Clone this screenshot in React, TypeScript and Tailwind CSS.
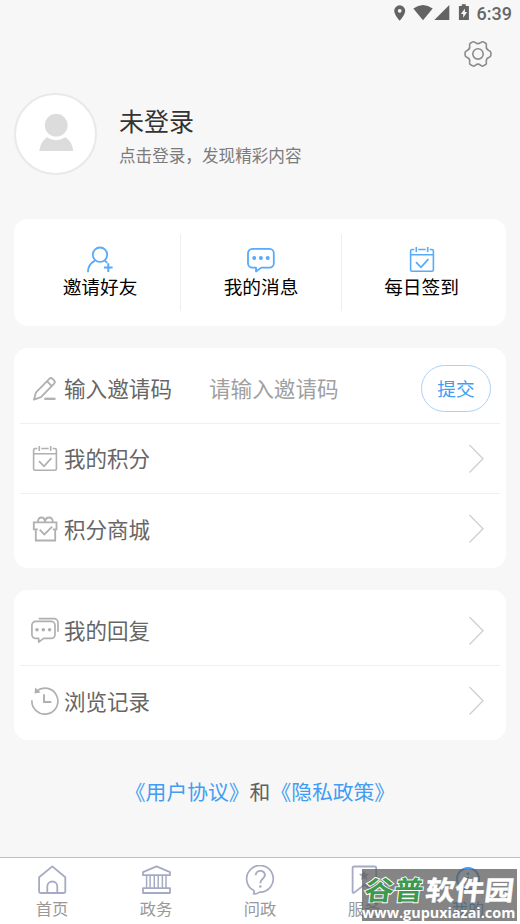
import React from 'react';

interface IconProps {
  className?: string;
}

const StatusIcons: React.FC = () => (
  <svg width="78" height="18" viewBox="393 4 78 18" fill="#636363">
    <path fillRule="evenodd" d="M399.7 5.3a5.5 5.5 0 0 0-5.5 5.5c0 4 5.5 10 5.5 10s5.5-6 5.5-10a5.5 5.5 0 0 0-5.5-5.5zm0 3.6a1.9 1.9 0 1 1 0 3.8 1.9 1.9 0 0 1 0-3.8z" />
    <path d="M413.3 8.6Q423 1.6 432.7 8.6L423 20.2z" />
    <path d="M449.3 5V20H434.3z" />
    <path fillRule="evenodd" d="M461.8 4.2h4v1.8h3.1V20h-10V6h2.9zm3.1 4.3-4 5.5h2.3v3.8l3.9-5.7h-2.2z" />
  </svg>
);

const GearIcon: React.FC = () => (
  <svg width="28" height="28" viewBox="0 0 28 28" fill="none" stroke="#8b8b8b" strokeWidth="1.6" strokeLinejoin="round">
    <path d="M8.7 1.9C9.9 1.3 10.6 2 11.5 2.7C13 3.9 15 3.9 16.5 2.7C17.4 2 18.1 1.3 19.3 1.9L21.7 3.3C22.9 4 22.5 5 22.3 6.1C22 8 23 9.7 24.8 10.4C25.9 10.8 26.9 11.2 26.9 12.5V15.3C26.9 16.6 25.9 17 24.8 17.4C23 18.1 22 19.8 22.3 21.7C22.5 22.8 22.9 23.8 21.7 24.5L19.3 25.9C18.1 26.5 17.4 25.8 16.5 25.1C15 23.9 13 23.9 11.5 25.1C10.6 25.8 9.9 26.5 8.7 25.9L6.3 24.5C5.1 23.8 5.5 22.8 5.7 21.7C6 19.8 5 18.1 3.2 17.4C2.1 17 1.1 16.6 1.1 15.3V12.5C1.1 11.2 2.1 10.8 3.2 10.4C5 9.7 6 8 5.7 6.1C5.5 5 5.1 4 6.3 3.3z" />
    <circle cx="14" cy="13.9" r="5.2" />
  </svg>
);

const InviteIcon: React.FC<IconProps> = ({ className }) => (
  <svg className={className} width="28" height="28" viewBox="0 0 28 28" fill="none" stroke="currentColor" strokeWidth="1.8">
    <circle cx="14" cy="8.7" r="7.2" />
    <path d="M1.9 26.2C1.9 21 4.5 17 8.9 14.6M18.7 14.6L21.3 16.7" />
    <path d="M22.3 17.3v8.6M18 21.6h8.6" strokeWidth="2" />
  </svg>
);

const MessageIcon: React.FC<IconProps> = ({ className }) => (
  <svg className={className} width="28" height="28" viewBox="0 0 28 28" fill="none" stroke="currentColor" strokeWidth="1.8" strokeLinejoin="round">
    <path d="M5.3 2.8H22.5A4.3 4.3 0 0 1 26.8 7.1V17.3A4.3 4.3 0 0 1 22.5 21.6H14.3L9 25.5V21.6H5.3A4.3 4.3 0 0 1 1 17.3V7.1A4.3 4.3 0 0 1 5.3 2.8z" />
    <g fill="currentColor" stroke="none">
      <circle cx="7.2" cy="12" r="2" />
      <circle cx="13.9" cy="12" r="2" />
      <circle cx="20.7" cy="12" r="2" />
    </g>
  </svg>
);

const CalendarIcon: React.FC<IconProps> = ({ className }) => (
  <svg className={className} width="28" height="28" viewBox="0 0 28 28" fill="none" stroke="currentColor" strokeWidth="1.6">
    <path d="M6.3 3.5H4.2Q2.6 3.5 2.6 5.1V23.7Q2.6 25.3 4.2 25.3H23.8Q25.4 25.3 25.4 23.7V5.1Q25.4 3.5 23.8 3.5H21.7M10.3 3.5H17.7M2.6 8.7H25.4M8.3 1V6M19.7 1V6" />
    <path d="M8 16.2L13 21.3L20.4 13.2" strokeWidth="1.8" />
  </svg>
);

const PencilIcon: React.FC<IconProps> = ({ className }) => (
  <svg className={className} width="28" height="28" viewBox="0 0 28 28" fill="none" stroke="currentColor" strokeWidth="1.8" strokeLinejoin="round">
    <path d="M3 24.6L5 17.3L18.3 3.8Q20 2.2 21.6 3.8L23.1 5.4Q24.6 7 23.1 8.6L10 22.2z" />
    <path d="M15.9 6.2L20.9 11.1" />
    <path d="M13.3 23.8H24.5" strokeWidth="2.3" />
  </svg>
);

const GiftIcon: React.FC<IconProps> = ({ className }) => (
  <svg className={className} width="28" height="28" viewBox="0 0 28 28" fill="none" stroke="currentColor" strokeWidth="1.8">
    <path d="M6.8 14.3H2.8V7.3H25.5V14.3H21.8M4.8 14.3V25.5H24.2V14.3" />
    <path d="M7 7C6.6 1 13.8 1 14.1 7M14.1 7C14.4 1 22.2 1 21.7 7" />
    <path d="M8.7 14.7L13.3 19.4L21.2 11.6" />
  </svg>
);

const ReplyIcon: React.FC<IconProps> = ({ className }) => (
  <svg className={className} width="28" height="28" viewBox="0 0 28 28" fill="none" stroke="currentColor" strokeWidth="1.7" strokeLinejoin="round">
    <path d="M4.7 4.4H20.2A3.8 3.8 0 0 1 24 8.2V17.6A3.8 3.8 0 0 1 20.2 21.4H12.6L7.7 25.2V21.4H4.7A3.8 3.8 0 0 1 0.9 17.6V8.2A3.8 3.8 0 0 1 4.7 4.4z" />
    <path d="M7.7 1.6H23A4 4 0 0 1 27 5.6V14.8" />
    <g fill="currentColor" stroke="none">
      <circle cx="6" cy="12.7" r="1.8" />
      <circle cx="12.3" cy="12.7" r="1.8" />
      <circle cx="18.6" cy="12.7" r="1.8" />
    </g>
  </svg>
);

const HistoryIcon: React.FC<IconProps> = ({ className }) => (
  <svg className={className} width="28" height="28" viewBox="0 0 28 28" fill="none" stroke="currentColor" strokeWidth="1.7">
    <path d="M0.9 13.3A13 13 0 1 0 5.5 4.2" />
    <path d="M4.2 0.5L3.5 6.6L9.6 5.4z" fill="currentColor" stroke="none" />
    <path d="M13 7.3V15H20.3" strokeWidth="1.9" />
  </svg>
);

const ChevronIcon: React.FC = () => (
  <svg width="16" height="30" viewBox="0 0 16 30" fill="none" stroke="#cfcfcf" strokeWidth="1.3">
    <path d="M0.5 1L14 14.7L0.5 28.5" />
  </svg>
);

const HomeIcon: React.FC = () => (
  <svg width="30" height="30" viewBox="0 0 30 30" fill="none" stroke="currentColor" strokeWidth="1.8" strokeLinejoin="round">
    <path d="M2.1 12.2L15.3 1.4L28.3 12.2V26.2Q28.3 28 26.5 28H3.9Q2.1 28 2.1 26.2z" />
    <path d="M10.3 28V21.5A4.9 4.9 0 0 1 20.3 21.5V28" />
  </svg>
);

const BankIcon: React.FC = () => (
  <svg width="30" height="30" viewBox="0 0 30 30" fill="none" stroke="currentColor" strokeWidth="1.8" strokeLinejoin="round">
    <path d="M2 7.2L15.5 1.4L29 7.2V10.2H2z" />
    <path d="M5.6 10.2V23M9.1 10.2V23M13.3 10.2V23M17.2 10.2V23M21.4 10.2V23M25 10.2V23" strokeWidth="1.5" />
    <path d="M2 23.2H29V28H2z" />
  </svg>
);

const QuestionIcon: React.FC = () => (
  <svg width="30" height="30" viewBox="0 0 30 30" fill="none" stroke="currentColor" strokeWidth="1.7">
    <path d="M8.8 25.6A13.3 13.3 0 1 1 14.5 27.1Q11.5 29.3 8.4 28.7Q9.5 27.5 8.8 25.6z" strokeLinejoin="round" />
    <path d="M10.7 10.3C10.9 4.3 20.1 4.5 19.9 10.3C19.7 14 15.3 13.7 15.3 18.2" strokeWidth="1.9" />
    <circle cx="15.3" cy="21.5" r="1.3" fill="currentColor" stroke="none" />
  </svg>
);

const BookmarkIcon: React.FC = () => (
  <svg width="30" height="30" viewBox="0 0 30 30" fill="none" stroke="currentColor" strokeWidth="1.8" strokeLinejoin="round">
    <path d="M5 1.5H25.7Q27.2 1.5 27.2 3V27.7L15.4 19.7L5.2 27.6Q3.6 28.5 3.6 26.7V3Q3.6 1.5 5 1.5z" />
    <path d="M15 5.4L16.5 8.6L20 9L17.4 11.4L18.1 14.9L15 13.2L11.9 14.9L12.6 11.4L10 9L13.5 8.6z" fill="currentColor" stroke="none" />
  </svg>
);

const MineIcon: React.FC = () => (
  <svg width="30" height="30" viewBox="0 0 30 30" fill="none" stroke="currentColor" strokeWidth="2">
    <circle cx="15" cy="14" r="11" />
    <path d="M15 11.8V20" />
    <circle cx="15" cy="8.8" r="1.4" fill="currentColor" stroke="none" />
  </svg>
);

const quickActions = [
  { label: '邀请好友', Icon: InviteIcon },
  { label: '我的消息', Icon: MessageIcon },
  { label: '每日签到', Icon: CalendarIcon },
];

const tabs = [
  { label: '首页', Icon: HomeIcon },
  { label: '政务', Icon: BankIcon },
  { label: '问政', Icon: QuestionIcon },
  { label: '服务', Icon: BookmarkIcon },
  { label: '我的', Icon: MineIcon, active: true },
];

interface MenuRowProps {
  label: string;
  Icon: React.FC<IconProps>;
  last?: boolean;
}

const MenuRow: React.FC<MenuRowProps> = ({ label, Icon, last }) => (
  <div className={`h-[70px] flex items-center pl-[11px] pr-[15px] ${last ? '' : 'border-b border-[#efefef]'}`}>
    <Icon className="text-[#b0b0b0] shrink-0" />
    <span className="ml-[5px] pb-px flex-1 text-[21.5px] text-[#666]">{label}</span>
    <ChevronIcon />
  </div>
);

const Watermark: React.FC = () => (
  <div className="absolute left-[362px] top-[869px] w-[155px] h-[52px] bg-[#5c5c5c]/75 whitespace-nowrap text-white">
    <div className="flex h-[36px] items-center pl-[3px] pt-[4px] text-[29.5px] font-bold leading-[30px] scale-y-90 -skew-x-6">
      <span className="text-[#3d9950] [-webkit-text-stroke:2px_white] [paint-order:stroke_fill]">谷普</span>
      <span className="ml-[2px] [-webkit-text-stroke:0.5px_white]">软件园</span>
    </div>
    <div className="font-['Open_Sans'] text-[14.4px] leading-[15px] font-bold">www.gupuxiazai.com</div>
  </div>
);

const App: React.FC = () => {
  return (
    <div className="relative w-[520px] h-[924px] overflow-hidden bg-[#f7f7f7] flex flex-col font-['Noto_Sans_CJK_SC',sans-serif] leading-none">
      <div className="h-[26px] flex items-center justify-end pr-[8px] gap-[6px]">
        <StatusIcons />
        <span className="pt-px font-[Roboto] text-[18px] font-medium text-[#666]">6:39</span>
      </div>
      <div className="h-[54px] flex justify-end pt-[14px] pr-[28px]">
        <GearIcon />
      </div>

      <header className="h-[139px] flex items-start pl-[14px] pt-[13px]">
        <div className="w-[83px] h-[82px] rounded-full border-2 border-[#e9e9e9] bg-white flex items-center justify-center">
          <svg width="36" height="40" viewBox="0 0 36 40" fill="#dcdcdc">
            <path d="M1.3 37C2 30 6 24.5 11 22H25C31 24.5 34.5 30 35.2 37z" />
            <circle cx="18.2" cy="11.2" r="15" fill="white" />
            <circle cx="18.2" cy="11.2" r="11.4" />
          </svg>
        </div>
        <div className="ml-[22px] pt-[15px]">
          <h1 className="text-[25px] leading-[25px] text-[#333]">未登录</h1>
          <p className="mt-[13px] text-[16.6px] leading-[18px] text-[#7b7b7b]">点击登录，发现精彩内容</p>
        </div>
      </header>

      <section className="mx-[14px] h-[107px] shrink-0 bg-white rounded-[14px] pl-[6px] pr-[5px] py-[15px] grid grid-cols-[161px_161px_1fr] divide-x divide-[#efefef]">
        {quickActions.map(({ label, Icon }) => (
          <div key={label} className="flex flex-col items-center pt-[12px]">
            <Icon className="text-[#58aafa]" />
            <span className="mt-[2px] text-[18.7px] leading-[20px] text-black">{label}</span>
          </div>
        ))}
      </section>

      <section className="mx-[14px] mt-[22px] h-[220px] shrink-0 bg-white rounded-[14px] pt-[6px] px-[6px]">
        <div className="h-[70px] flex items-center pl-[11px] pr-[9px] border-b border-[#efefef]">
          <PencilIcon className="text-[#b0b0b0]" />
          <span className="ml-[5px] pb-px w-[145px] text-[21.6px] text-[#666]">输入邀请码</span>
          <span className="flex-1 pb-[2px] text-[21.6px] text-[#a0a0a0]">请输入邀请码</span>
          <button className="w-[70px] h-[47px] rounded-full border-[1.5px] border-[#a9d2fb] text-[18.7px] text-[#3f9df3]">提交</button>
        </div>
        <MenuRow label="我的积分" Icon={CalendarIcon} />
        <MenuRow label="积分商城" Icon={GiftIcon} last />
      </section>

      <section className="mx-[14px] mt-[22px] h-[150px] shrink-0 bg-white rounded-[14px] pt-[6px] px-[6px]">
        <MenuRow label="我的回复" Icon={ReplyIcon} />
        <MenuRow label="浏览记录" Icon={HistoryIcon} last />
      </section>

      <p className="mt-[41px] text-center text-[20.8px] leading-[21px] text-[#606060]">
        <span className="text-[#429df2]">《用户协议》</span>和<span className="text-[#429df2]">《隐私政策》</span>
      </p>

      <nav className="mt-auto h-[67px] border-t border-[#bfbfbf] bg-white grid grid-cols-5">
        {tabs.map(({ label, Icon, active }) => (
          <div key={label} className={`flex flex-col items-center pt-[7px] ${active ? 'text-[#429df2]' : 'text-[#a5abc2]'}`}>
            <Icon />
            <span className={`mt-[4px] text-[16.3px] leading-[18px] ${active ? 'text-[#429df2]' : 'text-[#999]'}`}>{label}</span>
          </div>
        ))}
      </nav>

      <Watermark />
    </div>
  );
};

export default App;
